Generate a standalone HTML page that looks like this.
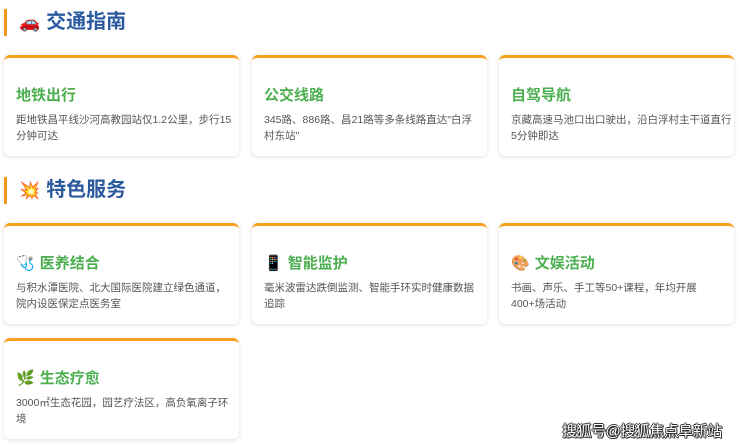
<!DOCTYPE html>
<html><head><meta charset="utf-8"><style>
*{margin:0;padding:0;box-sizing:border-box}
body{width:740px;height:445px;background:#fff;font-family:"Liberation Sans","Noto Sans CJK SC",sans-serif;position:relative;overflow:hidden}
.h{position:absolute;left:4px;height:27px;border-left:3px solid #f7941d;padding-left:12px;font-size:20px;font-weight:bold;color:#2c5a9e;line-height:27px;display:flex;align-items:center;gap:6px}
.c{position:absolute;width:235px;height:101px;background:#fff;border-top:3px solid #f7a020;border-radius:6px;box-shadow:0 1px 5px rgba(0,0,0,.13);padding:0 12px}
.t{position:absolute;left:12px;top:26px;font-size:15px;font-weight:bold;color:#4caf50;display:flex;align-items:center;gap:5px}
.d{position:absolute;left:12px;top:54px;font-size:10.5px;line-height:16px;color:#555;white-space:nowrap}
.wm{position:absolute;left:562px;top:420px;font-size:15px;color:#fff;text-shadow:1px 1px 0 #333,-1px 0 0 #333,0 -1px 0 #333,1px 0 0 #333,0 1px 0 #333;letter-spacing:-.5px}
</style></head><body>
<div class="h" style="top:9px"><span style="font-size:17px">🚗</span>交通指南</div>
<div class="c" style="left:4px;top:55px"><div class="t">地铁出行</div><div class="d">距地铁昌平线沙河高教园站仅1.2公里，步行15<br>分钟可达</div></div>
<div class="c" style="left:252px;top:55px"><div class="t">公交线路</div><div class="d">345路、886路、昌21路等多条线路直达"白浮<br>村东站"</div></div>
<div class="c" style="left:499px;top:55px"><div class="t">自驾导航</div><div class="d">京藏高速马池口出口驶出，沿白浮村主干道直行<br>5分钟即达</div></div>
<div class="h" style="top:177px"><span style="font-size:17px">💥</span>特色服务</div>
<div class="c" style="left:4px;top:223px"><div class="t"><span style="font-size:15px">🩺</span>医养结合</div><div class="d">与积水潭医院、北大国际医院建立绿色通道，<br>院内设医保定点医务室</div></div>
<div class="c" style="left:252px;top:223px"><div class="t"><span style="font-size:15px">📱</span>智能监护</div><div class="d">毫米波雷达跌倒监测、智能手环实时健康数据<br>追踪</div></div>
<div class="c" style="left:499px;top:223px"><div class="t"><span style="font-size:15px">🎨</span>文娱活动</div><div class="d">书画、声乐、手工等50+课程，年均开展<br>400+场活动</div></div>
<div class="c" style="left:4px;top:338px"><div class="t"><span style="font-size:15px">🌿</span>生态疗愈</div><div class="d">3000㎡生态花园，园艺疗法区，高负氧离子环<br>境</div></div>
<div class="wm">搜狐号@搜狐焦点阜新站</div>
</body></html>
